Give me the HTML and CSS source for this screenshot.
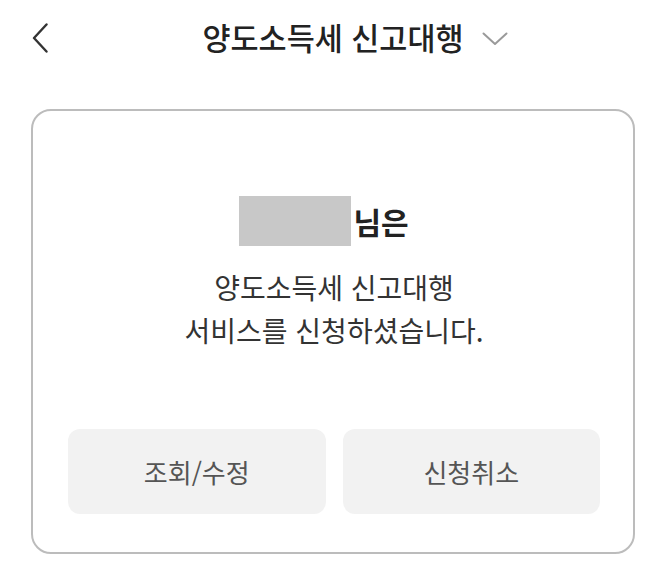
FILE: index.html
```html
<!DOCTYPE html>
<html lang="ko">
<head>
<meta charset="utf-8">
<link rel="stylesheet" href="styles.css">
</head>
<body>
<header class="header">
  <div class="header-left">
    <svg class="back" width="16" height="30" viewBox="0 0 16 30"><path d="M14.5 1.5 L2 15 L14.5 28.5" fill="none" stroke="#333" stroke-width="2.4" stroke-linecap="round" stroke-linejoin="round"/></svg>
  </div>
  <h1 class="title">양도소득세 신고대행</h1>
  <div class="header-right">
    <svg class="caret" width="26" height="14" viewBox="0 0 26 14"><path d="M1.5 1.5 L13 12 L24.5 1.5" fill="none" stroke="#9a9a9a" stroke-width="2" stroke-linecap="round" stroke-linejoin="round"/></svg>
  </div>
</header>
<main class="card">
  <div class="name-row">
    <span class="name-mask"></span><span class="name-suffix">님은</span>
  </div>
  <p class="message">양도소득세 신고대행<br>서비스를 신청하셨습니다.</p>
  <div class="actions">
    <button class="btn">조회/수정</button>
    <button class="btn">신청취소</button>
  </div>
</main>
</body>
</html>
```
FILE: styles.css
```css
* { box-sizing: border-box; }
html, body { margin: 0; padding: 0; background: #fff; }
body {
  width: 666px;
  font-family: "Noto Sans CJK KR", "Noto Sans", sans-serif;
  color: #333;
}
.header {
  height: 74px;
  display: grid;
  grid-template-columns: 1fr auto 1fr;
  align-items: center;
}
.header-left { padding-left: 32px; display: flex; align-items: center; }
.back { display: block; margin-top: 2px; }
.title {
  margin: 0;
  font-size: 30.5px;
  font-weight: 500;
  color: #222;
  line-height: 40px;
  letter-spacing: 0;
}
.header-right { padding-left: 18px; display: flex; align-items: center; }
.caret { display: block; margin-top: 4px; }
.card {
  margin: 35px 31px 0 31px;
  width: 604px;
  height: 445px;
  border: 2px solid #bcbcbc;
  border-radius: 20px;
  padding: 85px 33px 0 35px;
  display: flex;
  flex-direction: column;
}
.name-row {
  display: flex;
  justify-content: center;
  align-items: center;
  gap: 2px;
  padding-right: 20px;
  height: 50px;
}
.name-mask {
  width: 112px;
  height: 50px;
  background: #c8c8c8;
}
.name-suffix {
  font-size: 30px;
  font-weight: 700;
  color: #222;
  line-height: 50px;
}
.message {
  margin: 20px 0 0 0;
  text-align: center;
  font-size: 28px;
  line-height: 43px;
  color: #333;
}
.actions {
  display: flex;
  gap: 17px;
  margin-top: 77px;
}
.btn {
  flex: 1;
  height: 85px;
  border: 0;
  border-radius: 12px;
  background: #f2f2f2;
  font-family: inherit;
  font-size: 26px;
  color: #555;
  padding: 0;
}
```
